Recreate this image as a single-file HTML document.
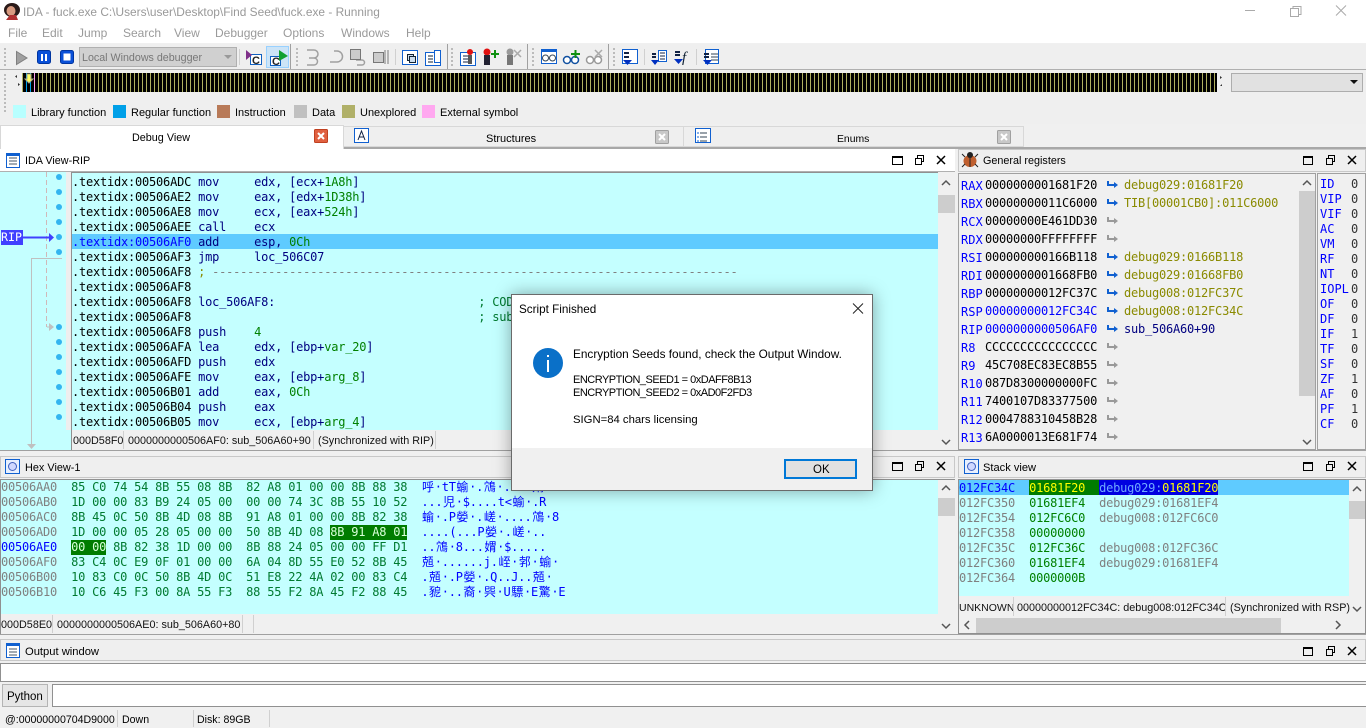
<!DOCTYPE html>
<html><head><meta charset="utf-8"><title>IDA</title>
<style>
html,body{margin:0;padding:0;width:1366px;height:728px;overflow:hidden;background:#f0f0f0}
body{position:relative;font-family:"Liberation Sans","Noto Sans CJK SC",sans-serif;font-size:11px;color:#000}
div{position:absolute;box-sizing:border-box}
.t{white-space:pre;line-height:15px;height:15px}
.mn{color:#9a9a9a;font-size:12px;top:26px}
.m{font-family:"DejaVu Sans Mono","Liberation Mono",monospace;font-size:12px;letter-spacing:-.22px;line-height:15px;white-space:pre;color:#000}
.m b{font-weight:normal}
.n{color:#000080}.g{color:#008000}.y{color:#8a8a00}.a{color:#808080}.bl{color:#0000ff}.gr{color:#007a30}
.hx i{font-style:normal;letter-spacing:0;display:inline-block;width:13.4px;text-align:center;font-family:"Noto Sans CJK SC",sans-serif;font-size:12px;line-height:13px;height:15px;overflow:visible;vertical-align:top}
.line{background:#a0a0a0}
.sep{background:#d0d0d0;width:1px}
.sw{width:13px;height:13px;top:105px}
.st{font-size:10.8px;color:#111}
</style></head><body>
<div style="left:0;top:0;width:1366px;height:43px;background:#fff"></div>
<div class="t" style="left:23px;top:5px;color:#999;font-size:11.9px">IDA - fuck.exe C:\Users\user\Desktop\Find Seed\fuck.exe - Running</div>
<div class="t mn" style="left:8px">File</div>
<div class="t mn" style="left:42px">Edit</div>
<div class="t mn" style="left:78px">Jump</div>
<div class="t mn" style="left:123px">Search</div>
<div class="t mn" style="left:174px">View</div>
<div class="t mn" style="left:215px">Debugger</div>
<div class="t mn" style="left:283px">Options</div>
<div class="t mn" style="left:341px">Windows</div>
<div class="t mn" style="left:406px">Help</div>

<!-- toolbar -->
<div style="left:0;top:44px;width:1366px;height:26px;background:#efefef;border-bottom:1px solid #b0b0b0"></div>
<div style="left:79px;top:47px;width:158px;height:20px;background:#d0d0d0;border:1px solid #b0b0b0"></div>
<div class="t" style="left:82px;top:51px;color:#777;font-size:10.7px">Local Windows debugger</div>
<div style="left:266px;top:46px;width:23px;height:22px;background:#cce4f7;border:1px solid #99d1ff"></div>
<div class="line" style="left:290px;top:44px;width:1px;height:25px"></div>
<div class="line" style="left:447px;top:44px;width:1px;height:25px"></div>
<div class="line" style="left:527px;top:44px;width:1px;height:25px"></div>
<div class="line" style="left:608px;top:44px;width:1px;height:25px"></div>
<div class="sep" style="left:239px;top:49px;height:16px"></div>
<div class="sep" style="left:395px;top:49px;height:16px"></div>
<div class="sep" style="left:644px;top:49px;height:16px"></div>
<div class="sep" style="left:696px;top:49px;height:16px"></div>

<!-- navigator -->
<div style="left:0;top:70px;width:1366px;height:54px;background:#efefef"></div>
<div style="left:22px;top:73px;width:1195px;height:19px;background:repeating-linear-gradient(90deg,#b0b060 0,#b0b060 1px,#000 1px,#000 4px)"></div>
<div style="left:26px;top:73px;width:1px;height:19px;background:#00a0e8"></div>
<div style="left:30px;top:73px;width:1px;height:19px;background:#00a0e8"></div>
<div style="left:34px;top:73px;width:1px;height:19px;background:#ffa0f0"></div>
<div style="left:1231px;top:73px;width:132px;height:19px;background:#e1e1e1;border:1px solid #adadad"></div>

<div class="sw" style="left:13px;background:#b8ffff"></div><div class="t" style="left:31px;top:106px">Library function</div>
<div class="sw" style="left:113px;background:#00a0e8"></div><div class="t" style="left:131px;top:106px">Regular function</div>
<div class="sw" style="left:217px;background:#b87a58"></div><div class="t" style="left:235px;top:106px">Instruction</div>
<div class="sw" style="left:294px;background:#c0c0c0"></div><div class="t" style="left:312px;top:106px">Data</div>
<div class="sw" style="left:342px;background:#b0b068"></div><div class="t" style="left:360px;top:106px">Unexplored</div>
<div class="sw" style="left:422px;background:#ffa8f0"></div><div class="t" style="left:440px;top:106px">External symbol</div>

<!-- tabs -->
<div style="left:0;top:126px;width:1024px;height:21px;background:#efefef;border:1px solid #d8d8d8"></div>
<div style="left:683px;top:126px;width:1px;height:21px;background:#d8d8d8"></div>
<div style="left:0;top:125px;width:344px;height:24px;background:#fff;border:1px solid #d8d8d8;border-bottom:0;z-index:2"></div>
<div style="left:0;top:147px;width:1366px;height:2px;background:#a8a8a8"></div>
<div style="left:0;top:147px;width:344px;height:2px;background:#fff"></div>
<div class="t" style="left:132px;top:131px;z-index:3;font-size:10.8px">Debug View</div>
<div class="t" style="left:486px;top:132px">Structures</div>
<div class="t" style="left:837px;top:132px;font-size:10.4px">Enums</div>

<!-- IDA view -->
<div style="left:0;top:149px;width:955px;height:23px;background:#fff;border-bottom:1px solid #b0b0b0"></div>
<div class="t" style="left:25px;top:154px;font-size:10.8px">IDA View-RIP</div>
<div style="left:0;top:172px;width:72px;height:278px;background:#c4ffff"></div>
<div style="left:66px;top:172px;width:5px;height:258px;background:#eee"></div>
<div style="left:71px;top:172px;width:867px;height:258px;background:#c4ffff;border-left:1px solid #909090;border-top:1px solid #909090"></div>
<div style="left:72px;top:234px;width:866px;height:15px;background:#5fcbff"></div>
<div style="left:938px;top:172px;width:17px;height:278px;background:#f0f0f0"></div>
<div style="left:938px;top:195px;width:17px;height:18px;background:#cdcdcd"></div>
<div style="left:71px;top:430px;width:867px;height:20px;background:#f0f0f0;border-left:1px solid #909090"></div>
<div class="t st" style="left:73px;top:434px">000D58F0</div>
<div class="sep" style="left:123px;top:431px;height:18px"></div>
<div class="t st" style="left:128px;top:434px">0000000000506AF0: sub_506A60+90</div>
<div class="sep" style="left:313px;top:431px;height:18px"></div>
<div class="t st" style="left:318px;top:434px">(Synchronized with RIP)</div>
<div class="sep" style="left:435px;top:431px;height:18px"></div>

<div class="m" style="left:72px;top:175px;width:866px;height:255px;overflow:hidden">.textidx:00506ADC <b class="n">mov     edx, [ecx+</b><b class="g">1A8h</b><b class="n">]</b>
.textidx:00506AE2 <b class="n">mov     eax, [edx+</b><b class="g">1D38h</b><b class="n">]</b>
.textidx:00506AE8 <b class="n">mov     ecx, [eax+</b><b class="g">524h</b><b class="n">]</b>
.textidx:00506AEE <b class="n">call    ecx</b>
<b class="bl">.textidx:00506AF0</b> <b class="n">add     esp, </b><b class="g">0Ch</b>
.textidx:00506AF3 <b class="n">jmp     loc_506C07</b>
.textidx:00506AF8 <b class="y">;</b> <b class="a">---------------------------------------------------------------------------</b>
.textidx:00506AF8
.textidx:00506AF8 <b class="n">loc_506AF8:</b>                             <b class="gr">; CODE XREF: sub_506A60+65</b>
.textidx:00506AF8                                         <b class="gr">; sub_506A60+6F</b>
.textidx:00506AF8 <b class="n">push    </b><b class="g">4</b>
.textidx:00506AFA <b class="n">lea     edx, [ebp+</b><b class="g">var_20</b><b class="n">]</b>
.textidx:00506AFD <b class="n">push    edx</b>
.textidx:00506AFE <b class="n">mov     eax, [ebp+</b><b class="g">arg_8</b><b class="n">]</b>
.textidx:00506B01 <b class="n">add     eax, </b><b class="g">0Ch</b>
.textidx:00506B04 <b class="n">push    eax</b>
.textidx:00506B05 <b class="n">mov     ecx, [ebp+</b><b class="g">arg_4</b><b class="n">]</b></div>
<div class="t" style="left:1px;top:230px;width:22px;height:15px;background:#4040ff;color:#fff;font-family:'DejaVu Sans Mono',monospace;font-size:11.6px;z-index:2">RIP</div>

<!-- registers -->
<div style="left:958px;top:149px;width:408px;height:23px;background:#efefef;border:1px solid #c8c8c8"></div>
<div class="t" style="left:983px;top:154px;font-size:10.8px">General registers</div>
<div style="left:958px;top:173px;width:358px;height:277px;background:#f0f0f0;border:1px solid #a0a0a0"></div>
<div style="left:1317px;top:173px;width:49px;height:277px;background:#f0f0f0;border:1px solid #a0a0a0"></div>
<div style="left:1299px;top:191px;width:16px;height:205px;background:#cdcdcd"></div>
<div class="m" style="left:985px;top:176px;line-height:18px">0000000001681F20
00000000011C6000
00000000E461DD30
00000000FFFFFFFF
000000000166B118
0000000001668FB0
00000000012FC37C
<b class="bl">00000000012FC34C</b>
<b class="bl">0000000000506AF0</b>
CCCCCCCCCCCCCCCC
45C708EC83EC8B55
087D8300000000FC
7400107D83377500
0004788310458B28
6A0000013E681F74</div>
<div class="m bl" style="left:961px;top:177px;line-height:18px;color:#0000ff;letter-spacing:0">RAX
RBX
RCX
RDX
RSI
RDI
RBP
RSP
RIP
R8
R9
R10
R11
R12
R13</div>
<div class="m" style="left:1124px;top:176px;line-height:18px"><b class="y">debug029:01681F20</b>
<b class="y">TIB[00001CB0]:011C6000</b>


<b class="y">debug029:0166B118</b>
<b class="y">debug029:01668FB0</b>
<b class="y">debug008:012FC37C</b>
<b class="y">debug008:012FC34C</b>
<b class="n">sub_506A60+90</b></div>
<div class="m" style="left:1320px;top:177px;line-height:15px;color:#0000ff;letter-spacing:0">ID
VIP
VIF
AC
VM
RF
NT
IOPL
OF
DF
IF
TF
SF
ZF
AF
PF
CF</div>
<div class="m" style="left:1351px;top:177px;line-height:15px;color:#333">0
0
0
0
0
0
0
0
0
0
1
0
0
1
0
1
0</div>

<div style="left:0;top:450px;width:1366px;height:1px;background:#a0a0a0"></div>

<!-- hex view -->
<div style="left:0;top:456px;width:955px;height:22px;background:#efefef;border:1px solid #c8c8c8"></div>
<div class="t" style="left:25px;top:461px;font-size:10.9px">Hex View-1</div>
<div style="left:0;top:479px;width:938px;height:135px;background:#c4ffff;border-left:1px solid #909090;border-top:1px solid #909090"></div>
<div style="left:938px;top:479px;width:17px;height:155px;background:#f0f0f0;border-top:1px solid #909090"></div>
<div style="left:938px;top:498px;width:17px;height:18px;background:#cdcdcd"></div>
<div style="left:330px;top:525px;width:77px;height:15px;background:#007c00"></div>
<div style="left:71px;top:540px;width:35px;height:15px;background:#007c00"></div>
<div class="m hx" style="left:1px;top:480px;height:135px;overflow:hidden"><b class="a">00506AA0</b>  <b class="gr">85 C0 74 54 8B 55 08 8B  82 A8 01 00 00 8B 88 38</b>  <b class="bl"><i>呼</i>·tT<i>蝓</i>·.<i>鴪</i>·....<i>媦</i>·8</b>
<b class="a">00506AB0</b>  <b class="gr">1D 00 00 83 B9 24 05 00  00 00 74 3C 8B 55 10 52</b>  <b class="bl">...<i>児</i>·$....t&lt;<i>蝓</i>·.R</b>
<b class="a">00506AC0</b>  <b class="gr">8B 45 0C 50 8B 4D 08 8B  91 A8 01 00 00 8B 82 38</b>  <b class="bl"><i>蝓</i>·.P<i>嫈</i>·.<i>嵯</i>·....<i>鴪</i>·8</b>
<b class="a">00506AD0</b>  <b class="gr">1D 00 00 05 28 05 00 00  50 8B 4D 08 <b style="color:#d8ffd8">8B 91 A8 01</b></b>  <b class="bl">....(...P<i>嫈</i>·.<i>嵯</i>·..</b>
<b class="bl">00506AE0</b>  <b class="gr"><b style="color:#d8ffd8">00 00</b> 8B 82 38 1D 00 00  8B 88 24 05 00 00 FF D1</b>  <b class="bl">..<i>鴪</i>·8...<i>媦</i>·$.....</b>
<b class="a">00506AF0</b>  <b class="gr">83 C4 0C E9 0F 01 00 00  6A 04 8D 55 E0 52 8B 45</b>  <b class="bl"><i>兡</i>·......j.<i>峌</i>·<i>郣</i>·<i>蝓</i>·</b>
<b class="a">00506B00</b>  <b class="gr">10 83 C0 0C 50 8B 4D 0C  51 E8 22 4A 02 00 83 C4</b>  <b class="bl">.<i>兡</i>·.P<i>嫈</i>·.Q..J..<i>兡</i>·</b>
<b class="a">00506B10</b>  <b class="gr">10 C6 45 F3 00 8A 55 F3  88 55 F2 8A 45 F2 88 45</b>  <b class="bl">.<i>豟</i>·..<i>裔</i>·<i>巺</i>·U<i>驃</i>·E<i>驚</i>·E</b></div>
<div style="left:0;top:614px;width:938px;height:20px;background:#f0f0f0;border-left:1px solid #909090"></div>
<div class="t st" style="left:1px;top:618px">000D58E0</div>
<div class="sep" style="left:52px;top:615px;height:18px"></div>
<div class="t st" style="left:57px;top:618px">0000000000506AE0: sub_506A60+80</div>
<div class="sep" style="left:242px;top:615px;height:18px"></div>
<div class="sep" style="left:253px;top:615px;height:18px"></div>
<div style="left:0;top:634px;width:1366px;height:1px;background:#a0a0a0"></div>

<!-- stack view -->
<div style="left:958px;top:456px;width:408px;height:22px;background:#efefef;border:1px solid #c8c8c8"></div>
<div class="t" style="left:983px;top:461px;font-size:11.1px">Stack view</div>
<div style="left:958px;top:479px;width:408px;height:155px;background:#f0f0f0;border:1px solid #909090"></div>
<div style="left:959px;top:480px;width:390px;height:116px;background:#c4ffff"></div>
<div style="left:959px;top:480px;width:390px;height:15px;background:#5fcbff"></div>
<div style="left:1029px;top:480px;width:70px;height:15px;background:#007c00"></div>
<div style="left:1099px;top:480px;width:119px;height:15px;background:#0000e0"></div>
<div style="left:1349px;top:501px;width:16px;height:18px;background:#cdcdcd"></div>
<div style="left:976px;top:618px;width:305px;height:15px;background:#cdcdcd"></div>
<div class="m" style="left:959px;top:481px"><b class="bl">012FC34C</b>  <b style="color:#ffff00">01681F20</b>  <b style="color:#6fa8ff">debug029:</b><b style="color:#ffff00">01681F20</b>
<b class="a">012FC350</b>  <b class="g">01681EF4</b>  <b class="a">debug029:01681EF4</b>
<b class="a">012FC354</b>  <b class="g">012FC6C0</b>  <b class="a">debug008:012FC6C0</b>
<b class="a">012FC358</b>  <b class="g">00000000</b>
<b class="a">012FC35C</b>  <b class="g">012FC36C</b>  <b class="a">debug008:012FC36C</b>
<b class="a">012FC360</b>  <b class="g">01681EF4</b>  <b class="a">debug029:01681EF4</b>
<b class="a">012FC364</b>  <b class="g">0000000B</b></div>
<div style="left:959px;top:596px;width:390px;height:21px;background:#f0f0f0"></div>
<div class="t" style="left:959px;top:601px;font-size:10.5px;color:#111">UNKNOWN</div>
<div class="sep" style="left:1013px;top:597px;height:19px"></div>
<div class="t st" style="left:1017px;top:601px">00000000012FC34C: debug008:012FC34C</div>
<div class="sep" style="left:1225px;top:597px;height:19px"></div>
<div class="t st" style="left:1230px;top:601px">(Synchronized with RSP)</div>

<!-- output -->
<div style="left:0;top:639px;width:1366px;height:22px;background:#efefef;border:1px solid #c8c8c8"></div>
<div class="t" style="left:25px;top:645px;font-size:11.2px">Output window</div>
<div style="left:0;top:663px;width:1366px;height:19px;background:#fff;border:1px solid #909090;border-right:0"></div>
<div style="left:2px;top:684px;width:46px;height:23px;background:#e6e6e6;border:1px solid #b4b4b4"></div>
<div class="t" style="left:7px;top:690px;font-size:11.5px">Python</div>
<div style="left:52px;top:684px;width:1314px;height:23px;background:#fff;border:1px solid #909090;border-right:0"></div>
<div class="t" style="left:5px;top:713px;font-size:10.6px">@:00000000704D9000</div>
<div class="sep" style="left:117px;top:710px;height:17px"></div>
<div class="t" style="left:122px;top:713px;font-size:10.6px">Down</div>
<div class="sep" style="left:193px;top:710px;height:17px"></div>
<div class="t" style="left:197px;top:713px;font-size:10.6px">Disk: 89GB</div>
<div class="sep" style="left:269px;top:710px;height:17px"></div>

<!-- all icons -->
<svg width="1366" height="728" viewBox="0 0 1366 728" style="position:absolute;left:0;top:0;z-index:4">
<!-- app icon -->
<ellipse cx="12" cy="10" rx="8" ry="7" fill="#2a1a18"/><ellipse cx="11" cy="11" rx="4.500" ry="5" fill="#d89a80"/><path d="M6 20L10 15L16 15L18 20Z" fill="#b03030"/>
<!-- window controls -->
<path d="M1245 10.500H1255" stroke="#aaa" fill="none"/>
<path d="M1290.500 8.500h8v8h-8zM1293 8.500V6.500h8v8h-2" stroke="#aaa" fill="none"/>
<path d="M1336 5.500L1346 15.500M1346 5.500L1336 15.500" stroke="#aaa" fill="none"/>
<!-- grips -->
<g fill="#bbb"><rect x="4" y="48" width="2" height="2"/><rect x="4" y="52" width="2" height="2"/><rect x="4" y="56" width="2" height="2"/><rect x="4" y="60" width="2" height="2"/><rect x="4" y="64" width="2" height="2"/>
<rect x="296" y="48" width="2" height="2"/><rect x="296" y="52" width="2" height="2"/><rect x="296" y="56" width="2" height="2"/><rect x="296" y="60" width="2" height="2"/><rect x="296" y="64" width="2" height="2"/>
<rect x="451" y="48" width="2" height="2"/><rect x="451" y="52" width="2" height="2"/><rect x="451" y="56" width="2" height="2"/><rect x="451" y="60" width="2" height="2"/><rect x="451" y="64" width="2" height="2"/>
<rect x="532" y="48" width="2" height="2"/><rect x="532" y="52" width="2" height="2"/><rect x="532" y="56" width="2" height="2"/><rect x="532" y="60" width="2" height="2"/><rect x="532" y="64" width="2" height="2"/>
<rect x="613" y="48" width="2" height="2"/><rect x="613" y="52" width="2" height="2"/><rect x="613" y="56" width="2" height="2"/><rect x="613" y="60" width="2" height="2"/><rect x="613" y="64" width="2" height="2"/>
<rect x="4" y="74" width="2" height="2"/><rect x="4" y="78" width="2" height="2"/><rect x="4" y="82" width="2" height="2"/><rect x="4" y="86" width="2" height="2"/><rect x="4" y="90" width="2" height="2"/><rect x="4" y="94" width="2" height="2"/><rect x="4" y="98" width="2" height="2"/><rect x="4" y="102" width="2" height="2"/><rect x="4" y="106" width="2" height="2"/><rect x="4" y="110" width="2" height="2"/></g>
<path d="M16.500 51.500L27 58L16.500 64.500Z" fill="#a0a0a0" stroke="#808080"/>
<rect x="37.500" y="50.500" width="13" height="13" rx="2" fill="#0a50d8" stroke="#0035a0"/><path d="M42 54V61M46 54V61" stroke="#fff" stroke-width="2"/>
<rect x="60.500" y="50.500" width="13" height="13" rx="2" fill="#0a50d8" stroke="#0035a0"/><rect x="63.500" y="53.500" width="7" height="7" fill="#fff"/>
<path d="M224 55H232L228 59Z" fill="#999"/>
<!-- attach icons -->
<rect x="250.500" y="54.500" width="11" height="10" fill="#fff" stroke="#1060c0"/><text x="252" y="64" font-size="11" font-weight="bold" font-family="Liberation Sans" fill="#222">C</text><path d="M246 50L252 55L246 60Z" fill="#80308a"/>
<rect x="270.500" y="56.500" width="10" height="9" fill="#fff" stroke="#1060c0"/><text x="272" y="65" font-size="11" font-weight="bold" font-family="Liberation Sans" fill="#222">C</text><path d="M279 50L288 56L279 61Z" fill="#10a030"/>
<!-- step icons -->
<g fill="none" stroke="#a0a0a0" stroke-width="1.500"><path d="M307 50H314A3.500 3.500 0 0 1 314 58H309H314A3.500 3.500 0 0 1 314 65H307"/><path d="M330 62H337A5 5 0 0 0 337 51H334"/><path d="M356 60H362A2.500 2.500 0 0 1 362 65H357"/><path d="M385 50V64M388 50V64"/></g>
<rect x="350.500" y="49.500" width="10" height="10" fill="#ccc" stroke="#777"/><rect x="373.500" y="52.500" width="10" height="10" fill="#ccc" stroke="#777"/>
<rect x="402.500" y="50.500" width="15" height="14" fill="#fff" stroke="#1060d0"/><rect x="407.500" y="54.500" width="6" height="6" fill="#cde" stroke="#123"/><rect x="409.500" y="56.500" width="6" height="6" fill="#cde" stroke="#123"/>
<rect x="425.500" y="52.500" width="15" height="13" fill="#fff" stroke="#1060d0"/><rect x="434.500" y="50.500" width="6" height="12" fill="#fff" stroke="#1060d0"/><path d="M428 56h5M428 59h5M428 62h5" stroke="#123"/>
<!-- breakpoints -->
<rect x="460.500" y="52.500" width="15" height="13" fill="#fff" stroke="#1060d0"/><path d="M463 56h7M463 59h7M463 62h7" stroke="#124"/><circle cx="470" cy="52" r="3" fill="#e01010"/><rect x="468" y="55" width="4" height="9" fill="#555"/>
<circle cx="487" cy="52" r="3.500" fill="#e01010"/><rect x="484" y="55" width="6" height="10" fill="#223"/><path d="M491 54h8M495 50v8" stroke="#109010" stroke-width="2"/>
<circle cx="510" cy="52" r="3.500" fill="#999"/><rect x="507" y="55" width="6" height="10" fill="#777"/><path d="M514 50l7 7M521 50l-7 7" stroke="#aaa" stroke-width="1.500"/>
<!-- watches -->
<rect x="541.500" y="49.500" width="15" height="14" fill="#fff" stroke="#1060d0"/><rect x="541" y="49" width="16" height="3" fill="#1060d0"/><circle cx="545.500" cy="58" r="3" fill="#fff" stroke="#345"/><circle cx="552.500" cy="58" r="3" fill="#fff" stroke="#345"/>
<circle cx="567" cy="60" r="3.500" fill="#fff" stroke="#1050a0" stroke-width="1.500"/><circle cx="575" cy="60" r="3.500" fill="#fff" stroke="#1050a0" stroke-width="1.500"/><path d="M571 54h9M575.500 50v8" stroke="#109010" stroke-width="2"/>
<circle cx="590" cy="60" r="3.500" fill="#fff" stroke="#999" stroke-width="1.500"/><circle cx="598" cy="60" r="3.500" fill="#fff" stroke="#999" stroke-width="1.500"/><path d="M595 50l7 7M602 50l-7 7" stroke="#aaa" stroke-width="1.500"/>
<!-- jump icons -->
<rect x="622.500" y="49.500" width="15" height="14" fill="#fff" stroke="#1060d0"/><rect x="624" y="52" width="5" height="2" fill="#124"/><rect x="624" y="56" width="5" height="2" fill="#124"/><path d="M623 60H632L627.500 65Z" fill="#0030c0"/>
<rect x="658.500" y="50.500" width="8" height="11" fill="#fff" stroke="#1060d0"/><path d="M660 53h5M660 56h5M660 59h5" stroke="#124"/><path d="M652 54h4M652 57h4" stroke="#124" stroke-width="2"/><path d="M651 60H659L655 65Z" fill="#0030c0"/>
<path d="M675 52h5M675 55h5" stroke="#124" stroke-width="2"/><path d="M674 59H683L678.500 64Z" fill="#0030c0"/><text x="682" y="62" font-size="15" font-style="italic" font-family="Liberation Serif" fill="#123">f</text>
<rect x="705.500" y="49.500" width="13" height="14" fill="#fff" stroke="#1060d0"/><path d="M711 54h7M711 57h7M711 60h7" stroke="#345"/><path d="M704 54h5M704 57h5" stroke="#124" stroke-width="2"/><path d="M703 60H712L707.500 65Z" fill="#0030c0"/>
<!-- navigator markers -->
<path d="M27 74h4v5h2l-4 4l-4-4h2z" fill="#ffff60" stroke="#aa8"/>
<path d="M17 75v3l-2-1.500zM18 86l2-1.500l-2-1.500z" fill="#333"/>
<path d="M1220 76l2 1.500l-2 1.500zM1220 86h2v-2z" fill="#333"/>
<path d="M1350 80H1358L1354 84Z" fill="#111"/>
<!-- tab icons -->
<rect x="314.500" y="129.500" width="13" height="13" rx="1" fill="#e06040" stroke="#c04020"/><path d="M318 133l6 6M324 133l-6 6" stroke="#fff" stroke-width="2"/>
<rect x="655.500" y="130.500" width="13" height="13" rx="1" fill="#c8c8c8" stroke="#a0a0a0"/><path d="M659 134l6 6M665 134l-6 6" stroke="#fff" stroke-width="2"/>
<rect x="997.500" y="130.500" width="13" height="13" rx="1" fill="#c8c8c8" stroke="#a0a0a0"/><path d="M1001 134l6 6M1007 134l-6 6" stroke="#fff" stroke-width="2"/>
<rect x="354.500" y="128.500" width="14" height="14" fill="#fff" stroke="#1060d0"/><path d="M358 140L361.500 131L365 140M359 137h5" stroke="#124" fill="none"/>
<rect x="695.500" y="128.500" width="15" height="14" fill="#fff" stroke="#1060d0"/><path d="M700 133h7M700 137h7M700 141h7" stroke="#345"/><path d="M697 133h2M697 137h2M697 141h2" stroke="#1060d0"/>
<!-- panel icons -->
<rect x="6.500" y="154.500" width="13" height="13" fill="#fff" stroke="#1060d0"/><rect x="6" y="153" width="14" height="3" fill="#1060d0"/><path d="M9 158h8M9 161h8M9 164h8" stroke="#456"/>
<ellipse cx="970" cy="161" rx="6.500" ry="6" fill="#c06030"/><circle cx="970" cy="155" r="3" fill="#222"/><path d="M970 155v12M962 154l3 3M978 154l-3 3M962 167l3-3M978 167l-3-3" stroke="#222"/>
<rect x="5.500" y="459.500" width="14" height="14" fill="#e8f0ff" stroke="#1060d0"/><circle cx="12.500" cy="466.500" r="4" fill="#d0d8ff" stroke="#4060c0"/>
<rect x="964.500" y="459.500" width="14" height="14" fill="#e8f0ff" stroke="#1060d0"/><circle cx="971.500" cy="466.500" r="4" fill="#d0d8ff" stroke="#4060c0"/>
<rect x="6.500" y="644.500" width="13" height="13" fill="#fff" stroke="#1060d0"/><rect x="6" y="643" width="14" height="3" fill="#1060d0"/><path d="M9 649h8M9 652h8M9 655h8" stroke="#456"/>
<!-- window buttons -->
<g fill="none" stroke="#000">
<path d="M892.500 156.500h10v8h-10zM892 157.500h11"/><path d="M915.500 158.500h6v6h-6zM917.500 158V155.500h6v6h-2"/><path d="M937 156l8 8M945 156l-8 8" stroke-width="1.500"/>
<path d="M1303.500 156.500h9v8h-9zM1303 157.500h10"/><path d="M1326.500 158.500h6v6h-6zM1328.500 158V155.500h6v6h-2"/><path d="M1348 156l8 8M1356 156l-8 8" stroke-width="1.500"/>
<path d="M892.500 462.500h10v8h-10zM892 463.500h11"/><path d="M915.500 464.500h6v6h-6zM917.500 464V461.500h6v6h-2"/><path d="M937 462l8 8M945 462l-8 8" stroke-width="1.500"/>
<path d="M1303.500 462.500h9v8h-9zM1303 463.500h10"/><path d="M1326.500 464.500h6v6h-6zM1328.500 464V461.500h6v6h-2"/><path d="M1348 462l8 8M1356 462l-8 8" stroke-width="1.500"/>
<path d="M1303.500 647.500h9v8h-9zM1303 648.500h10"/><path d="M1326.500 649.500h6v6h-6zM1328.500 649V646.500h6v6h-2"/><path d="M1348 647l8 8M1356 647l-8 8" stroke-width="1.500"/>
</g>
<!-- gutter -->
<path d="M46.500 172V327" stroke="#d0b8b8" stroke-dasharray="5 3" fill="none"/>
<path d="M47 327h6" stroke="#c0c0c0"/><path d="M49 323L54 327L49 331Z" fill="#c0c0c0"/>
<path d="M62 258.500H31.500V445" stroke="#c0c0c0" fill="none"/><path d="M27 444H36L31.500 449Z" fill="#c0c0c0"/>
<path d="M22 237.500H50" stroke="#4040ff" stroke-width="2"/><path d="M49 233L54 237.500L49 242Z" fill="#4040ff"/>
<g fill="#33b5f0"><circle cx="59" cy="177" r="3"/><circle cx="59" cy="192" r="3"/><circle cx="59" cy="207" r="3"/><circle cx="59" cy="222" r="3"/><circle cx="59" cy="237" r="3"/><circle cx="59" cy="252" r="3"/><circle cx="59" cy="327" r="3"/><circle cx="59" cy="342" r="3"/><circle cx="59" cy="357" r="3"/><circle cx="59" cy="372" r="3"/><circle cx="59" cy="387" r="3"/><circle cx="59" cy="402" r="3"/><circle cx="59" cy="417" r="3"/></g>
<!-- scroll arrows -->
<g fill="none" stroke="#555" stroke-width="1.500">
<path d="M942 185l4-4l4 4M942 440l4 4l4-4"/><path d="M1303 185l4-4l4 4M1303 440l4 4l4-4"/><path d="M942 490l4-4l4 4M942 624l4 4l4-4"/><path d="M1353 491l4-4l4 4M1353 607l4 4l4-4"/><path d="M969 621l-4 4l4 4M1336 621l4 4l-4 4"/>
</g>
<!-- reg arrows -->
<g fill="none" stroke-width="2"><path d="M1108 181v4h7" stroke="#1060d0"/><path d="M1108 199v4h7" stroke="#1060d0"/><path d="M1108 253v4h7" stroke="#1060d0"/><path d="M1108 271v4h7" stroke="#1060d0"/><path d="M1108 289v4h7" stroke="#1060d0"/><path d="M1108 307v4h7" stroke="#1060d0"/><path d="M1108 325v4h7" stroke="#1060d0"/>
<path d="M1108 217v4h7" stroke="#999"/><path d="M1108 235v4h7" stroke="#999"/><path d="M1108 343v4h7" stroke="#999"/><path d="M1108 361v4h7" stroke="#999"/><path d="M1108 379v4h7" stroke="#999"/><path d="M1108 397v4h7" stroke="#999"/><path d="M1108 415v4h7" stroke="#999"/><path d="M1108 433v4h7" stroke="#999"/></g>
<g fill="#1060d0"><path d="M1114 182l4 3l-4 3z"/><path d="M1114 200l4 3l-4 3z"/><path d="M1114 254l4 3l-4 3z"/><path d="M1114 272l4 3l-4 3z"/><path d="M1114 290l4 3l-4 3z"/><path d="M1114 308l4 3l-4 3z"/><path d="M1114 326l4 3l-4 3z"/></g>
<g fill="#999"><path d="M1114 218l4 3l-4 3z"/><path d="M1114 236l4 3l-4 3z"/><path d="M1114 344l4 3l-4 3z"/><path d="M1114 362l4 3l-4 3z"/><path d="M1114 380l4 3l-4 3z"/><path d="M1114 398l4 3l-4 3z"/><path d="M1114 416l4 3l-4 3z"/><path d="M1114 434l4 3l-4 3z"/></g>
</svg>

<!-- dialog -->
<div style="left:511px;top:294px;width:362px;height:197px;background:#fff;border:1px solid #6a6a6a;box-shadow:0 0 16px rgba(0,0,0,.35);z-index:10"></div>
<div style="left:512px;top:448px;width:360px;height:42px;background:#f0f0f0;z-index:11"></div>
<div class="t" style="left:519px;top:302px;z-index:12;font-size:11.7px">Script Finished</div>
<div class="t" style="left:573px;top:347px;z-index:12;font-size:11.8px">Encryption Seeds found, check the Output Window.</div>
<div class="t" style="left:573px;top:373px;z-index:12;font-size:11px;letter-spacing:-.5px">ENCRYPTION_SEED1 = 0xDAFF8B13</div>
<div class="t" style="left:573px;top:386px;z-index:12;font-size:11px;letter-spacing:-.5px">ENCRYPTION_SEED2 = 0xAD0F2FD3</div>
<div class="t" style="left:573px;top:413px;z-index:12;font-size:11.3px">SIGN=84 chars licensing</div>
<div style="left:784px;top:459px;width:73px;height:20px;background:#e1e1e1;border:2px solid #0078d7;z-index:12"></div>
<div class="t" style="left:813px;top:463px;z-index:13;font-size:11.5px">OK</div>
<svg width="1366" height="728" viewBox="0 0 1366 728" style="position:absolute;left:0;top:0;z-index:13">
<circle cx="548" cy="363" r="15" fill="#0a70c8"/><rect x="547" y="360" width="2" height="12" fill="#fff"/><rect x="547" y="355" width="2" height="2" fill="#fff"/>
<path d="M853 303.500L863 313.500M863 303.500L853 313.500" stroke="#222" fill="none"/>
</svg>
</body></html>
